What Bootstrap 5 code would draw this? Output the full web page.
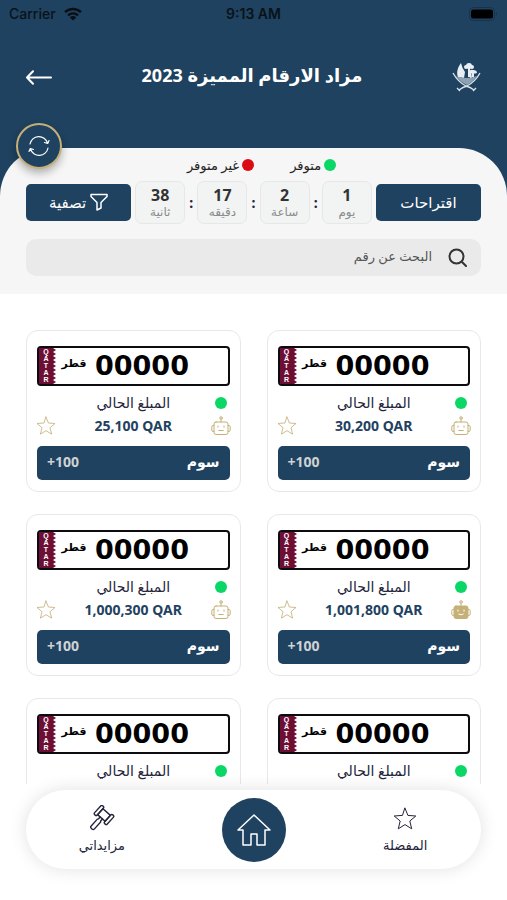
<!DOCTYPE html>
<html lang="ar" dir="rtl">
<head>
<meta charset="utf-8">
<meta name="viewport" content="width=device-width, initial-scale=1">
<title>مزاد الارقام المميزة 2023</title>
<link href="https://cdn.jsdelivr.net/npm/bootstrap@5.3.0/dist/css/bootstrap.min.css" rel="stylesheet">
<style>
:root{--navy:#1f4260;--gold:#c5b078;--page:"Noto Sans","DejaVu Sans",sans-serif}
body{font-family:var(--page);color:#23243a;font-size:14px;line-height:20px;background:#fff}
svg{display:block;flex:none}
.line-icon{fill:none;stroke:currentColor;stroke-linecap:round;stroke-linejoin:round}
.top-area{background:var(--navy)}
.status-line{font:500 14px/28px Inter,sans-serif;color:#0a1219;padding:0 9px;display:grid;grid-template-columns:1fr auto 1fr}
.title-bar{height:98px;padding:0 26px;margin-bottom:22px}
.title-bar h1{font-size:18px;line-height:28px;font-weight:700;padding-bottom:4px}
.panel{background:#f6f6f6;border-radius:48px 48px 0 0;padding:7px 26px 18px}
.refresh-btn{width:46px;height:46px;left:16px;top:-25px;background:var(--navy);border:2px solid var(--gold);box-shadow:0 4px 8px rgba(0,0,0,.3)}
.legend-row{font-size:13px;line-height:20px;color:#222;gap:36px;margin-bottom:6px;padding-left:16px}
.legend-row span{gap:3px}
.dot{width:12px;height:12px;border-radius:50%;background:#0bd766;flex:none}
.dot-red{background:#dc0b12}
.navy-btn{background:var(--navy);color:#fff;border:0;border-radius:5px}
.tool-btn{flex:0 1 105px;height:37px;font-size:15px;padding:0 6px 2px}
.time-box{flex:0 1 50px;height:43px;border:1px solid #e6e8e8;border-radius:7px;background:#f2f4f4;color:#333;text-align:center;padding-top:4px}
.time-box b{font-size:16px;line-height:18px;display:block}
.time-box span{font-size:12px;line-height:16px;display:block;color:#8b8b8b}
.search-box{background:#eaeaea;border-radius:10px;height:37px;margin-top:15px;padding:0 14px;color:#333;gap:14px}
.search-box input{border:0;background:none;outline:0;min-width:0;font-size:13px;line-height:20px;padding-bottom:5px}
.search-box input::placeholder{color:#555;opacity:1}
.lots{overflow:hidden auto;min-height:0;scrollbar-width:none;padding:36px 26px 0}
.lots::-webkit-scrollbar{display:none}
.lot-grid{display:grid;grid-template-columns:1fr 1fr;gap:22px 26px}
.lot{border:1px solid #e8e8e8;border-radius:12px;padding:15px 10px 11px;background:#fff}
.plate{height:40px;border:2px solid #0c0c10;border-radius:4px;direction:ltr;color:#000}
.plate-num{font:700 27px/36px "DejaVu Sans",sans-serif;margin-left:8px}
.plate-ar{font:700 11px/32px "DejaVu Sans",sans-serif;width:26px;text-align:center;margin-left:5px}
.plate-flag{background:#6d0f35;color:#fff;width:14px;font:700 7px/7px "Liberation Sans",sans-serif}
.lot-info{display:grid;grid-template-columns:18px 1fr 18px;grid-template-rows:22px 24px;align-items:center;justify-items:center;margin:6px 0 8px}
.lot-price{color:var(--navy);font-weight:700;direction:ltr}
.icon-btn{border:0;background:none;padding:0;color:var(--gold)}
.bid-btn{height:34px;padding:0 10px 3px;font-size:14px;font-weight:700}
.bid-btn span:last-child{color:#cfd3d6;direction:ltr}
.bottom-nav{flex:none;margin:6px 26px 31px;height:79px;border-radius:40px;background:#fff;box-shadow:0 0 18px rgba(0,0,0,.12);display:grid;grid-template-columns:1fr 1fr 1fr;position:relative}
.bottom-nav a{color:#23243a;text-decoration:none;font-size:13px}
.home-link{width:64px;height:64px;background:var(--navy)}
</style>
<script src="https://cdn.jsdelivr.net/npm/bootstrap@5.3.0/dist/js/bootstrap.bundle.min.js"></script>
</head>
<body>
<svg width="0" height="0" class="position-absolute" aria-hidden="true">
<symbol id="star" viewBox="0 0 24 24"><path d="M12 1.200l2.900 7.200 7.900.6-6 5 1.900 7.800L12 17.600l-6.700 4.200L7.200 14l-6-5 7.900-.6z"/></symbol>
<symbol id="robot" viewBox="0 0 20 20"><circle cx="10" cy="2" r="1.300"/><path d="M10 3.400V6M5 6h10a2 2 0 0 1 2 2v8.500a2 2 0 0 1-2 2H5a2 2 0 0 1-2-2V8a2 2 0 0 1 2-2zM3 9.500H2a1.200 1.200 0 0 0-1.200 1.200v3.500A1.200 1.200 0 0 0 2 15.400h1M17 9.500h1a1.200 1.200 0 0 1 1.200 1.200v3.500a1.200 1.200 0 0 1-1.200 1.200h-1M7 10v1.200M13 10v1.200M7.800 14.500h4.400"/></symbol>
<symbol id="robot-on" viewBox="0 0 20 20"><circle cx="10" cy="2" r="1.300"/><path d="M10 3.400V6M3 9.500H2a1.200 1.200 0 0 0-1.200 1.200v3.500A1.200 1.200 0 0 0 2 15.400h1M17 9.500h1a1.200 1.200 0 0 1 1.200 1.200v3.500a1.200 1.200 0 0 1-1.200 1.200h-1"/><rect x="3" y="6" width="14" height="12.500" rx="2" fill="currentColor"/><path stroke="#fff" d="M7 10v1.200M13 10v1.200M7.800 14.200q2.200 1.200 4.400 0"/></symbol>
<symbol id="teeth" viewBox="0 0 3 36"><path fill="#6d0f35" d="M0 0l3 2-3 2 3 2-3 2 3 2-3 2 3 2-3 2 3 2-3 2 3 2-3 2 3 2-3 2 3 2-3 2 3 2-3 2z"/></symbol>
</svg>
<div class="vh-100 d-flex flex-column overflow-hidden">
<header class="top-area">
  <div class="status-line" dir="ltr">
    <div class="d-flex align-items-center gap-2"><span>Carrier</span>
      <svg width="18" height="14" viewBox="0 0 18 14"><g fill="none" stroke="#0a0f14" stroke-width="2.400"><path d="M1 5.200a11.500 11.500 0 0 1 16 0M4 8.400a7.200 7.200 0 0 1 10 0"/></g><path fill="#0a0f14" d="M5.800 10.400a4.600 4.600 0 0 1 6.400 0L9 13.600z"/></svg></div>
    <span class="fw-semibold">9:13 AM</span>
    <div class="d-flex align-items-center justify-content-end"><svg width="29" height="14" viewBox="0 0 29 14"><rect x=".5" y=".5" width="25" height="13" rx="4" fill="none" stroke="#17324a"/><rect x="2" y="2.500" width="22" height="9" rx="2.500"/><path d="M27 5v4q2-2 0-4z" fill="#17324a"/></svg></div>
  </div>
  <div class="title-bar d-flex align-items-center justify-content-between text-white">
    <svg width="29" height="30" viewBox="0 0 29 30" fill="#e9eef2" role="img" aria-label="قطر"><path d="M6 15C4 10 6 5 9 1q1 5 4 9l-1 6zM18 9h1l1 7h-2z"/><circle cx="17" cy="4" r="3"/><circle cx="14" cy="5" r="2"/><circle cx="20" cy="5" r="2"/><path d="M17 10q1-3 4-2 4 0 4 3-3 1-8 0zM16 6h2v9h-2zM20 10h2v5h-2z"/><path fill="#8da3b3" d="M4 14q10 4 21 0-4 6-10 9Q8 20 4 14z"/><path fill="none" stroke="#dce4ea" stroke-width="1.300" d="M1 11q5 9 13 13 4 1 8 4M28 11q-5 9-13 13-4 1-8 4M5 26l3 3M24 26l-3 3"/></svg>
    <h1 class="mb-0">مزاد الارقام المميزة 2023</h1>
    <button class="icon-btn text-white" aria-label="رجوع"><svg width="26" height="15" viewBox="0 0 26 15" class="line-icon" stroke-width="2"><path d="M25 7.500H1M7 1.200L1 7.500l6 6.300"/></svg></button>
  </div>
  <section class="panel position-relative">
    <button class="refresh-btn position-absolute rounded-circle text-white d-flex align-items-center justify-content-center p-0" aria-label="تحديث"><svg width="22" height="22" viewBox="0 0 22 22" class="line-icon" stroke-width="1.200"><path d="M2 9a9 9 0 0 1 17.500-1M20 13a9 9 0 0 1-17.500 1M16.500 7.500l3.200 1L21 5.500M5.500 14.500l-3.200-1L1 16.500"/></svg></button>
    <div class="legend-row d-flex justify-content-center">
      <span class="d-flex align-items-center"><i class="dot"></i>متوفر</span>
      <span class="d-flex align-items-center"><i class="dot dot-red"></i>غير متوفر</span>
    </div>
    <div class="d-flex align-items-center justify-content-between">
      <button class="navy-btn tool-btn">اقتراحات</button>
      <div class="time-box"><b>1</b><span>يوم</span></div><b>:</b>
      <div class="time-box"><b>2</b><span>ساعة</span></div><b>:</b>
      <div class="time-box"><b>17</b><span>دقيقه</span></div><b>:</b>
      <div class="time-box"><b>38</b><span>ثانية</span></div>
      <button class="navy-btn tool-btn d-flex align-items-center justify-content-center gap-1"><svg width="18" height="18" viewBox="0 0 18 18" class="line-icon" stroke-width="1.500"><path d="M1 1.500h16v2l-6 6v5.500l-4 2V9.500l-6-6z"/></svg>تصفية</button>
    </div>
    <label class="search-box d-flex align-items-center"><svg width="19" height="19" viewBox="0 0 19 19" class="line-icon" stroke-width="2"><circle cx="8.500" cy="8.500" r="7"/><path d="M14 14l4 4"/></svg><input class="flex-fill" type="search" placeholder="البحث عن رقم" aria-label="البحث عن رقم"></label>
  </section>
</header>
<main class="lots flex-fill"><div class="lot-grid" id="lots"></div></main>
<nav class="bottom-nav align-items-center">
  <a href="#" class="d-flex flex-column align-items-center gap-1"><svg width="26" height="26" viewBox="0 0 26 26" class="line-icon"><use href="#star" x="1" y="2" width="24" height="24"/></svg>المفضلة</a>
  <a href="#" class="home-link rounded-circle d-flex align-items-center justify-content-center text-white mx-auto" aria-label="الرئيسية"><svg width="34" height="32" viewBox="0 0 34 32" class="line-icon" stroke-width="1.500"><path d="M17 1L1 16h5v15h8V20h6v11h8V16h5z"/></svg></a>
  <a href="#" class="d-flex flex-column align-items-center gap-1"><svg width="26" height="26" viewBox="0 0 26 26" class="line-icon" stroke-width="1.400"><g transform="rotate(42 15 10)"><rect x="10" y="6" width="10" height="8"/><rect x="6.500" y="4" width="3.500" height="12" rx="1.500"/><rect x="20" y="4" width="3.500" height="12" rx="1.500"/><path d="M13.500 14v2.500l-.7 1V27q0 1.500 2.200 1.500t2.200-1.500v-9.500l-.7-1V14"/></g></svg>مزايداتي</a>
</nav>
</div>
<script>
const lots=[["30,200",0],["25,100",0],["1,001,800",1],["1,000,300",0],["1,001,800",0],["1,000,300",0]];
const letters=[..."QATAR"].map(c=>`<span>${c}</span>`).join("");
document.getElementById("lots").innerHTML=lots.map(([price,on])=>`
<article class="lot">
  <div class="plate d-flex"><div class="plate-flag d-flex flex-column align-items-center">${letters}</div><svg width="3" height="36"><use href="#teeth"/></svg><span class="plate-ar">قطر</span><span class="plate-num">00000</span></div>
  <div class="lot-info">
    <i class="dot"></i><span>المبلغ الحالي</span><span></span>
    <button class="icon-btn" aria-label="مزايدة آلية"><svg width="20" height="20" viewBox="0 0 20 20" class="line-icon"><use href="#robot${on?"-on":""}"/></svg></button>
    <span class="lot-price">${price} QAR</span>
    <button class="icon-btn" aria-label="المفضلة"><svg width="20" height="20" viewBox="0 0 20 20" class="line-icon"><use href="#star" width="20" height="20"/></svg></button>
  </div>
  <button class="navy-btn bid-btn w-100 d-flex align-items-center justify-content-between"><span>سوم</span><span>+100</span></button>
</article>`).join("");
</script>
</body>
</html>
